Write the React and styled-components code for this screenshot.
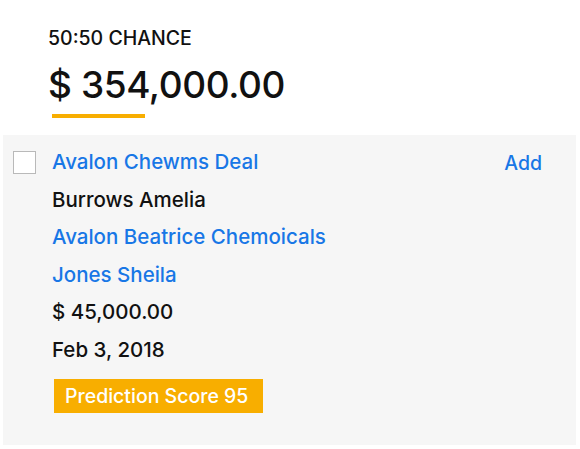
import React from "react";
import styled, { createGlobalStyle } from "styled-components";

const GlobalStyle = createGlobalStyle`
  html, body {
    margin: 0;
    padding: 0;
    background: #ffffff;
  }
  body {
    font-family: Inter, "Liberation Sans", sans-serif;
    color: #111111;
  }
`;

const Page = styled.div`
  width: 580px;
  height: 449px;
  padding: 0 4px 0 3px;
  box-sizing: border-box;
  display: flex;
  flex-direction: column;
`;

const Header = styled.div`
  padding: 27px 0 0 45px;
  height: 135px;
  box-sizing: border-box;
`;

const Label = styled.div`
  font-size: 19.5px;
  font-weight: 500;
  line-height: 22px;
  color: #111;
`;

const Amount = styled.div`
  font-size: 37px;
  font-weight: 500;
  line-height: 40px;
  margin-top: 16px;
  color: #111;
  letter-spacing: -0.4px;
`;

const Underline = styled.div`
  width: 93px;
  height: 4px;
  margin: 9px 0 0 4px;
  background: #f8ae00;
`;

const Panel = styled.div`
  height: 310px;
  background: #f6f6f6;
  display: flex;
  align-items: flex-start;
  padding: 16px 34px 0 10px;
  box-sizing: border-box;
`;

const Checkbox = styled.div`
  width: 21px;
  height: 21px;
  border: 1px solid #b9b9b9;
  background: #fff;
  flex: none;
`;

const Details = styled.div`
  flex: 1;
  margin-left: 16px;
  display: flex;
  flex-direction: column;
`;

const Line = styled.div`
  font-size: 20.5px;
  font-weight: 500;
  line-height: 37.6px;
  color: ${(p) => (p.$link ? "#1877e6" : "#111")};
  margin-top: ${(p) => (p.$first ? "-8px" : "0")};
`;

const Badge = styled.div`
  align-self: flex-start;
  margin: 10px 0 0 2px;
  background: #f8ae00;
  color: #fff;
  font-size: 19.5px;
  font-weight: 500;
  line-height: 34px;
  padding: 0 15px 0 11px;
`;

const AddLink = styled.a`
  font-size: 19.5px;
  font-weight: 500;
  line-height: 22px;
  color: #1877e6;
  text-decoration: none;
  margin-top: 1px;
`;

export default function App() {
  return (
    <>
      <GlobalStyle />
      <Page>
        <Header>
          <Label>50:50 CHANCE</Label>
          <Amount>$ 354,000.00</Amount>
          <Underline />
        </Header>
        <Panel>
          <Checkbox />
          <Details>
            <Line $link $first>Avalon Chewms Deal</Line>
            <Line>Burrows Amelia</Line>
            <Line $link>Avalon Beatrice Chemoicals</Line>
            <Line $link>Jones Sheila</Line>
            <Line>$ 45,000.00</Line>
            <Line>Feb 3, 2018</Line>
            <Badge>Prediction Score 95</Badge>
          </Details>
          <AddLink href="#">Add</AddLink>
        </Panel>
      </Page>
    </>
  );
}
